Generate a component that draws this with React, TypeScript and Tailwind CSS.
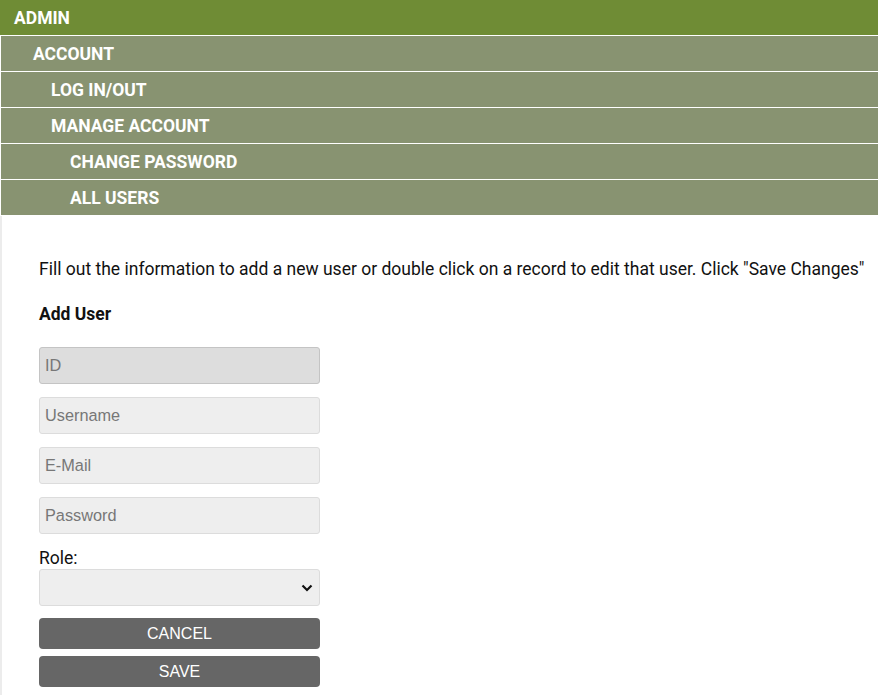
import { useState } from "react";

const menu = [
  { label: "ADMIN", indent: "pl-[14px]", top: true },
  { label: "ACCOUNT", indent: "pl-[32px]" },
  { label: "LOG IN/OUT", indent: "pl-[50px]" },
  { label: "MANAGE ACCOUNT", indent: "pl-[50px]" },
  { label: "CHANGE PASSWORD", indent: "pl-[69px]" },
  { label: "ALL USERS", indent: "pl-[69px]" },
];

function MenuRow({ label, indent, top }: { label: string; indent: string; top?: boolean }) {
  return (
    <div
      className={`h-[36px] pt-[2px] border-b border-white flex items-center text-white font-bold text-[17.5px] ${indent} ${
        top ? "bg-[#6f8c35]" : "ml-px bg-[#889371]"
      }`}
    >
      {label}
    </div>
  );
}

function Field({ placeholder, disabled }: { placeholder: string; disabled?: boolean }) {
  return (
    <input
      type="text"
      placeholder={placeholder}
      disabled={disabled}
      className={`block w-[281px] h-[37px] px-[5px] rounded-[3px] border text-[16.3px] placeholder:text-[#777] outline-none ${
        disabled ? "bg-[#dddddd] border-[#c4c4c4]" : "bg-[#eeeeee] border-[#dcdcdc]"
      }`}
      style={{ fontFamily: "'Liberation Sans', Arial, sans-serif" }}
    />
  );
}

export default function App() {
  const [role, setRole] = useState("");

  return (
    <div className="w-[878px] min-h-[695px] bg-white" style={{ fontFamily: "Roboto, 'Noto Sans', sans-serif" }}>
      <nav>
        {menu.map((m) => (
          <MenuRow key={m.label} {...m} />
        ))}
      </nav>

      <div className="border-l-2 border-[#ececec] pl-[37px] pt-[43px] pb-[8px] min-h-[479px] text-[17.5px] text-[#111]">
        <p className="whitespace-nowrap leading-[21px]">
          Fill out the information to add a new user or double click on a record to edit that user. Click "Save Changes"
        </p>
        <h2 className="font-bold mt-[24px] leading-[21px]">Add User</h2>

        <div className="mt-[22px] flex flex-col gap-[13px]">
          <Field placeholder="ID" disabled />
          <Field placeholder="Username" />
          <Field placeholder="E-Mail" />
          <Field placeholder="Password" />
        </div>

        <label className="block mt-[13px] leading-[22px]">Role:</label>
        <div className="relative w-[281px]">
          <select
            value={role}
            onChange={(e) => setRole(e.target.value)}
            className="block w-full h-[37px] appearance-none rounded-[3px] border border-[#dcdcdc] bg-[#eeeeee] px-[6px] outline-none"
          >
            <option value=""></option>
            <option value="admin">Admin</option>
            <option value="user">User</option>
          </select>
          <svg
            className="absolute right-[7px] top-[15px] pointer-events-none"
            width="12"
            height="8"
            viewBox="0 0 12 8"
          >
            <path d="M1.5 1.5 L6 6 L10.5 1.5" fill="none" stroke="#111" strokeWidth="2.2" />
          </svg>
        </div>

        <div
          className="mt-[12px] flex flex-col gap-[7px] w-[281px]"
          style={{ fontFamily: "'Liberation Sans', Arial, sans-serif" }}
        >
          <button className="h-[31px] rounded-[4px] bg-[#666666] text-white text-[16px]">CANCEL</button>
          <button className="h-[31px] rounded-[4px] bg-[#666666] text-white text-[16px]">SAVE</button>
        </div>
      </div>
    </div>
  );
}
